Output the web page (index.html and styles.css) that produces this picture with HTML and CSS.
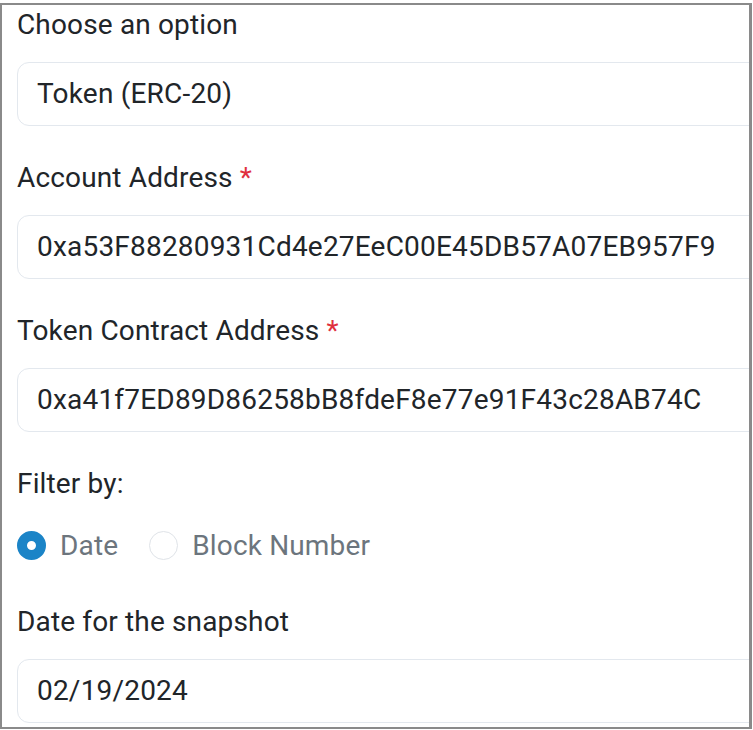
FILE: index.html
```html
<!DOCTYPE html>
<html>
<head>
<meta charset="utf-8">
<link rel="stylesheet" href="styles.css">
</head>
<body>
<div class="frame">
  <div class="form">
    <div class="field">
      <div class="label">Choose an option</div>
      <div class="input">Token (ERC-20)</div>
    </div>
    <div class="field">
      <div class="label">Account Address <span class="req">*</span></div>
      <div class="input">0xa53F88280931Cd4e27EeC00E45DB57A07EB957F9</div>
    </div>
    <div class="field">
      <div class="label">Token Contract Address <span class="req">*</span></div>
      <div class="input">0xa41f7ED89D86258bB8fdeF8e77e91F43c28AB74C</div>
    </div>
    <div class="field field-radio">
      <div class="label">Filter by:</div>
      <div class="radios">
        <label class="radio"><span class="dot checked"></span><span class="rtext">Date</span></label>
        <label class="radio"><span class="dot"></span><span class="rtext">Block Number</span></label>
      </div>
    </div>
    <div class="field">
      <div class="label">Date for the snapshot</div>
      <div class="input">02/19/2024</div>
    </div>
  </div>
</div>
</body>
</html>
```

FILE: styles.css
```css
html, body {
  margin: 0;
  padding: 0;
  background: #ffffff;
}
body {
  font-family: Roboto, "Liberation Sans", sans-serif;
  color: #212529;
  letter-spacing: 0.15px;
}
.frame {
  margin-top: 3px;
  width: 747px;
  height: 722px;
  border-style: solid;
  border-color: #8a8a8a;
  border-width: 2px 3px 2px 2px;
  overflow: hidden;
}
.form {
  padding-left: 15px;
  padding-top: 0;
}
.field {
  margin-bottom: 32px;
}
.field-radio {
  margin-bottom: 37px;
}
.label {
  font-size: 28px;
  line-height: 40px;
  margin-bottom: 17px;
}
.field-radio .label {
  margin-bottom: 21px;
}
.req {
  color: #e0303e;
}
.input {
  box-sizing: border-box;
  width: 800px;
  height: 64px;
  border: 1px solid #e3e8ee;
  border-radius: 12px;
  padding-left: 19px;
  font-size: 28px;
  line-height: 62px;
  color: #212529;
  letter-spacing: 0.2px;
}
.radios {
  display: flex;
  align-items: center;
  gap: 31px;
  height: 40px;
}
.radio {
  display: flex;
  align-items: center;
  gap: 14px;
}
.dot {
  box-sizing: border-box;
  width: 29px;
  height: 29px;
  border-radius: 50%;
  border: 1px solid #dfe3e8;
}
.dot.checked {
  border: 10px solid #1b84c7;
  background: #fff;
}
.rtext {
  font-size: 28px;
  color: #6c757d;
}
```
